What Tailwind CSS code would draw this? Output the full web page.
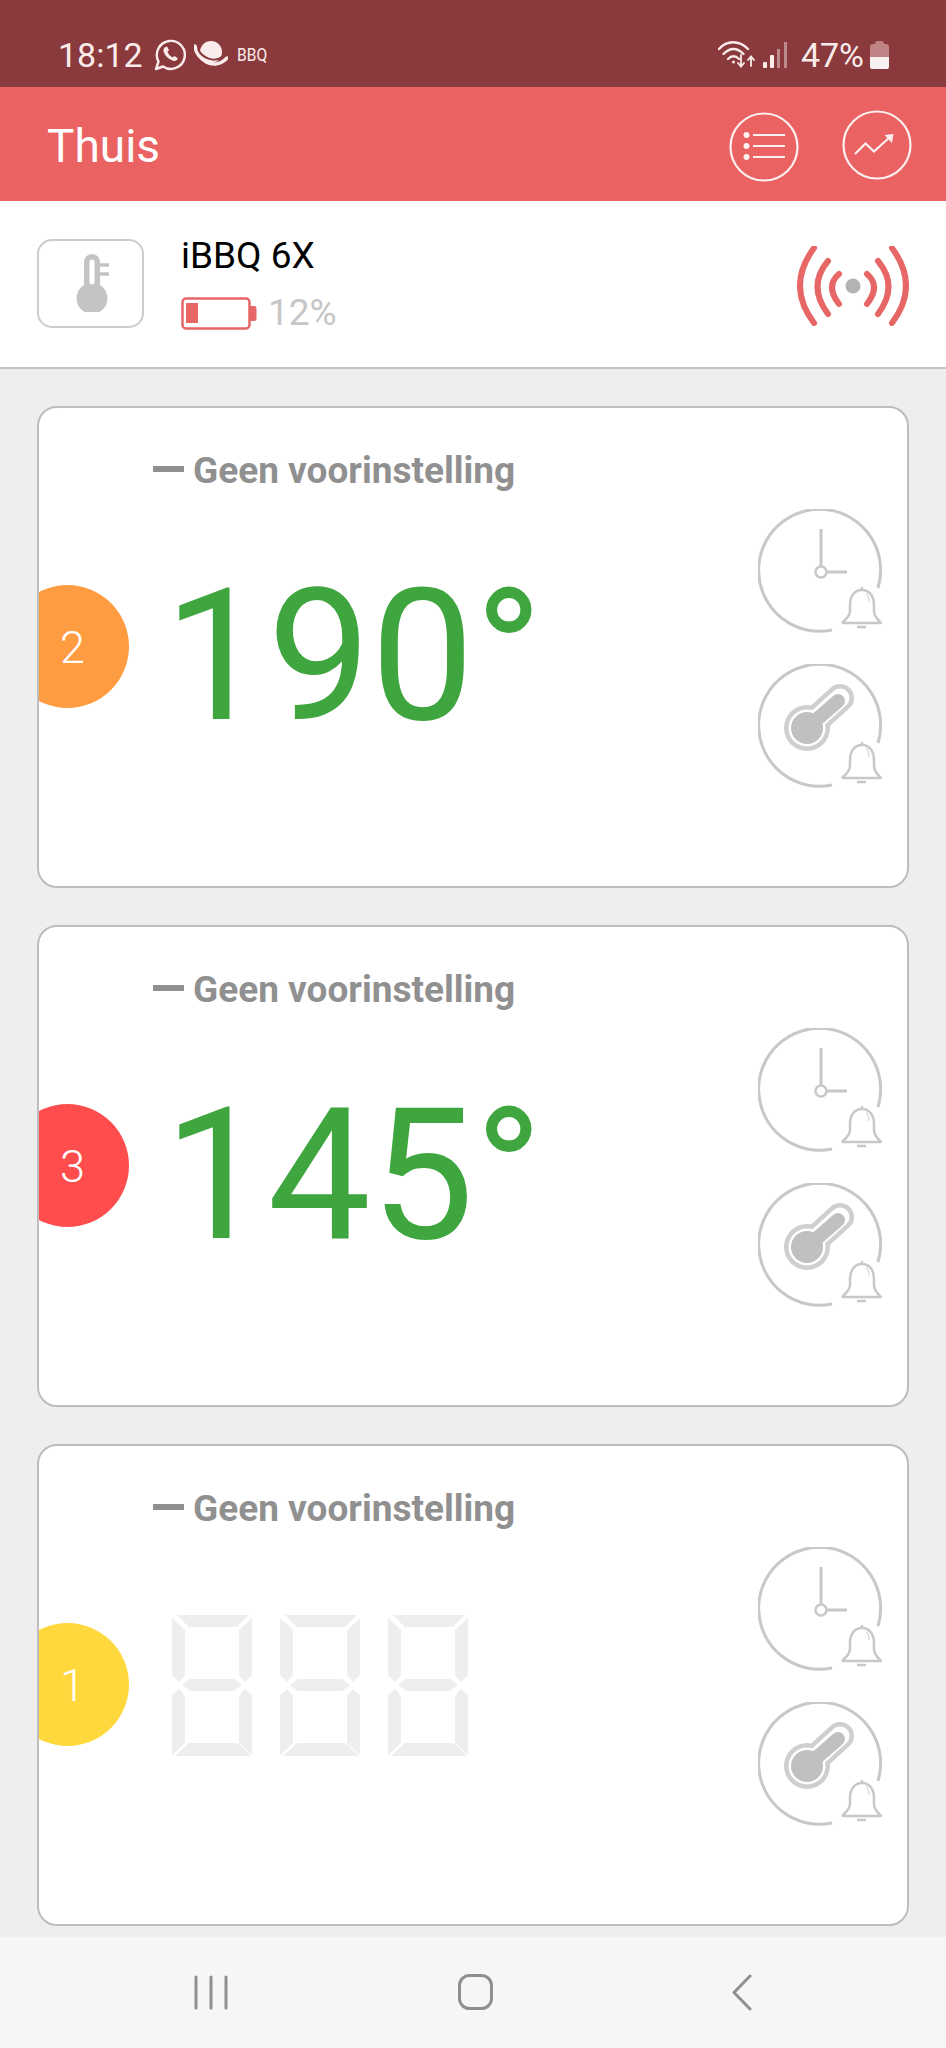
<!DOCTYPE html>
<html lang="nl">
<head>
	<title>iBBQ Thuis</title>
	<meta name="viewport" content="width=device-width, initial-scale=1">
	<script src="https://cdn.jsdelivr.net/npm/@tailwindcss/browser@4"></script>
</head>
<body>
	<!-- shared icons -->
	<svg class="hidden">
		<symbol id="bell" viewBox="0 0 124 124">
			<path d="M104 78v3M104 81C96 81 92 88 92 96V102C92 107 88 110 85 113Q84 114 86 114H122Q124 114 122 113C119 110 116 107 116 102V96C116 88 112 81 104 81ZM99 118H108" fill="#fff" stroke="#c8c8c8" stroke-width="2.500"/>
			<path d="M108 84.500Q111 87 111 93" fill="none" stroke="#d8d8d8" stroke-width="1.200"/>
		</symbol>
		<symbol id="clock" viewBox="0 0 124 124">
			<path d="M120 79A61 61 0 1 0 74 121" fill="none" stroke="#c8c8c8" stroke-width="3"/>
			<path d="M63 20V58M68.500 63H89" fill="none" stroke="#c8c8c8" stroke-width="3"/>
			<circle cx="63" cy="63" r="5.500" fill="#fff" stroke="#c8c8c8" stroke-width="2.500"/>
			<use href="#bell" width="124" height="124"/>
		</symbol>
		<symbol id="probe" viewBox="0 0 124 124">
			<path d="M120 79A61 61 0 1 0 74 121" fill="none" stroke="#c8c8c8" stroke-width="3"/>
			<path d="M49 64L82 34" stroke="#cfcfcf" stroke-width="28" stroke-linecap="round"/>
			<circle cx="49" cy="64" r="23" fill="#cfcfcf"/>
			<path d="M49 64L82 34" stroke="#fff" stroke-width="19" stroke-linecap="round"/>
			<circle cx="49" cy="64" r="18.500" fill="#fff"/>
			<path d="M49 64L80 37" stroke="#c0c0c0" stroke-width="14" stroke-linecap="round"/>
			<circle cx="49" cy="64" r="16" fill="#c0c0c0"/>
			<use href="#bell" width="124" height="124"/>
		</symbol>
		<symbol id="segments" viewBox="0 0 80 141">
			<path fill="#eeeeee" d="M5 0H77L65 12H17ZM0 3L13 15V60L7 67L0 60ZM80 3L67 15V60L73 67L80 60ZM18 64H62L70 70L62 76H18L10 70ZM0 80L7 74L13 81V128L0 140ZM80 80L73 74L67 81V128L80 140ZM3 141L17 128H66L79 141Z"/>
		</symbol>
	</svg>

	<div class="w-[946px] h-[2048px] flex flex-col overflow-hidden bg-[#eeeeee] font-[Roboto,sans-serif]">

		<!-- status bar -->
		<div class="h-[87px] shrink-0 bg-[#8a3a3c] text-[#fbecec] flex items-center pl-[58px] pr-[57px] pt-[22px]">
			<span class="text-[34px] leading-none">18:12</span>
			<svg class="ml-[11px] w-[32px] h-[33px]" viewBox="0 0 32 33" fill="none" stroke="#fbecec">
				<path d="M2 31L4.500 23.500A14 14 0 1 1 9 28.500Z" stroke-width="2.400" stroke-linejoin="round"/>
				<path d="M10.500 9.500Q9 11 9.500 13.500Q12 20.500 19.500 23Q22.500 23.500 24 20.500L20.500 18L18.500 19.500Q15 18 13.500 14L15 12L13 8.500Z" fill="#fbecec" stroke="none"/>
			</svg>
			<svg class="ml-[8px] w-[34px] h-[27px]" viewBox="0 0 34 27" fill="none">
				<circle cx="17" cy="11" r="11" fill="#fbecec"/>
				<path d="M1 5C2 18 20 31 33 17" stroke="#fbecec" stroke-width="3.500" stroke-linecap="round"/>
				<path d="M4 8C8 17 20 22 28 16" stroke="#8a3a3c" stroke-width="2"/>
			</svg>
			<span class="ml-[9px] text-[19px] leading-none scale-x-[.82] origin-left">BBQ</span>
			<svg class="ml-auto w-[37px] h-[27px]" viewBox="0 0 37 27" fill="none" stroke="#fbecec" stroke-width="2.400" stroke-linecap="round">
				<path d="M1 8C9 -1 21 -1 30 8M5.500 13C12 6.500 19 6.500 25.500 13M10 18C13.500 14.500 17.500 14.500 21 18"/>
				<circle cx="15.500" cy="21" r="1.500" fill="#fbecec" stroke="none"/>
				<path d="M23 14V25M20 22L23 25.500L26 22M33 25V16M30 19L33 15.500L36 19" stroke-width="1.800"/>
			</svg>
			<svg class="ml-[8px] w-[24px] h-[26px]" viewBox="0 0 24 26">
				<rect x="0" y="20" width="4" height="6" rx="1" fill="#fbecec"/>
				<rect x="7" y="13" width="4" height="13" rx="1" fill="#fbecec"/>
				<rect x="14" y="7" width="3" height="19" fill="#bf8a8c"/>
				<rect x="21" y="0" width="3" height="26" fill="#bf8a8c"/>
			</svg>
			<span class="ml-[14px] text-[34px] leading-none">47%</span>
			<svg class="ml-[6px] w-[19px] h-[28px]" viewBox="0 0 19 28">
				<path d="M5 3Q5 0 8 0H11Q14 0 14 3H16Q19 3 19 6V16H0V6Q0 3 3 3Z" fill="#c08486"/>
				<path d="M0 16H19V26Q19 28 17 28H2Q0 28 0 26Z" fill="#f6f0f0"/>
			</svg>
		</div>

		<!-- app bar -->
		<div class="h-[114px] shrink-0 bg-[#ea6262] flex items-center pl-[47px] pr-[34px] text-white">
			<span class="text-[46px] leading-none mt-[4px]">Thuis</span>
			<svg class="ml-auto w-[70px] h-[70px] mt-[5px]" viewBox="0 0 70 70" fill="none" stroke="#fdf0f0" stroke-width="2.200">
				<circle cx="35" cy="35" r="33.500"/>
				<path d="M24 23H56M24 34H56M24 45H56"/>
				<g fill="#fdf0f0" stroke="none"><circle cx="17.500" cy="23" r="3"/><circle cx="17.500" cy="34" r="3"/><circle cx="17.500" cy="45" r="3"/></g>
			</svg>
			<svg class="ml-[43px] w-[70px] h-[70px] mt-[1px]" viewBox="0 0 70 70" fill="none" stroke="#fdf0f0" stroke-width="2.200">
				<circle cx="35" cy="35" r="33.500"/>
				<path d="M13 44L23.500 33.500L32 41.500L49 26"/>
				<path d="M42.500 25L51.500 24L50 33Z" fill="#fdf0f0" stroke="none"/>
			</svg>
		</div>

		<!-- device row -->
		<div class="h-[168px] shrink-0 bg-white border-b-2 border-[#c4c4c4] flex items-start pl-[37px] pr-[37px]">
			<div class="mt-[38px] w-[107px] h-[89px] rounded-[15px] border-2 border-[#cccccc] flex items-center justify-center pb-[3px] pl-[2px]">
				<svg class="w-[34px] h-[60px]" viewBox="0 0 34 60">
					<path d="M9 33V10A8 8 0 0 1 25 10V33A15.500 15.500 0 1 1 9 33Z" fill="#c4c4c4"/>
					<path d="M17 10V30" stroke="#fff" stroke-width="5" stroke-linecap="round"/>
					<path d="M25 13H34M25 22H34" stroke="#c4c4c4" stroke-width="3.500"/>
				</svg>
			</div>
			<div class="ml-[37px] mt-[35px] flex flex-col">
				<span class="text-[37px] leading-[40px] text-black">iBBQ 6X</span>
				<div class="flex items-center mt-[17px] h-[40px]">
					<svg class="w-[76px] h-[33px]" viewBox="0 0 76 33">
						<rect x="1.500" y="1.500" width="67" height="30" rx="3.500" fill="#fff" stroke="#e76666" stroke-width="2.500"/>
						<rect x="5" y="6" width="12" height="20" fill="#e76666"/>
						<path d="M69 9H73Q75.500 9 75.500 11V22Q75.500 24 73 24H69Z" fill="#e76666"/>
					</svg>
					<span class="ml-[11px] text-[37px] leading-[40px] text-[#c6c6c6]">12%</span>
				</div>
			</div>
			<svg class="ml-auto mt-[45px] w-[112px] h-[80px]" viewBox="0 0 112 80" fill="none" stroke="#e76666" stroke-width="6" stroke-linecap="round">
				<path d="M17 2Q-11 40 17 77M31 15Q10 40 31 68M42 28Q28 40 42 58"/>
				<path d="M95 2Q123 40 95 77M81 15Q102 40 81 68M70 28Q84 40 70 58"/>
				<circle cx="56" cy="40" r="7.500" fill="#b3b3b3" stroke="none"/>
			</svg>
		</div>

		<!-- probes -->
		<div class="flex-1 px-[37px] pt-[37px] flex flex-col gap-[37px] overflow-hidden">

			<div class="h-[482px] shrink-0 flex rounded-[20px] border-2 border-[#bdbdbd] bg-white overflow-hidden">
				<div class="flex-1">
					<div class="ml-[114px] mt-[42px] h-[40px] flex items-center text-[#909090] font-bold text-[37px] leading-none">
						<span class="w-[31px] h-[6px] bg-[#909090] mr-[9px] mb-[3px]"></span>Geen voorinstelling
					</div>
					<div class="flex mt-[73px]">
						<div class="-ml-[33px] mt-[22px] w-[123px] h-[123px] shrink-0 rounded-full bg-[#ff9c41] text-white flex items-center justify-center pl-[10px] pt-[3px] text-[45px] font-light">2</div>
						<div class="ml-[35px] mt-[1px] text-[184px] leading-none text-[#3fa63f]">190°</div>
					</div>
				</div>
				<div class="w-[124px] mr-[25px] pt-[101px] flex flex-col gap-[31px]">
					<svg class="w-[124px] h-[124px]"><use href="#clock"/></svg>
					<svg class="w-[124px] h-[124px]"><use href="#probe"/></svg>
				</div>
			</div>

			<div class="h-[482px] shrink-0 flex rounded-[20px] border-2 border-[#bdbdbd] bg-white overflow-hidden">
				<div class="flex-1">
					<div class="ml-[114px] mt-[42px] h-[40px] flex items-center text-[#909090] font-bold text-[37px] leading-none">
						<span class="w-[31px] h-[6px] bg-[#909090] mr-[9px] mb-[3px]"></span>Geen voorinstelling
					</div>
					<div class="flex mt-[73px]">
						<div class="-ml-[33px] mt-[22px] w-[123px] h-[123px] shrink-0 rounded-full bg-[#ff4d4d] text-white flex items-center justify-center pl-[10px] pt-[3px] text-[45px] font-light">3</div>
						<div class="ml-[35px] mt-[1px] text-[184px] leading-none text-[#3fa63f]">145°</div>
					</div>
				</div>
				<div class="w-[124px] mr-[25px] pt-[101px] flex flex-col gap-[31px]">
					<svg class="w-[124px] h-[124px]"><use href="#clock"/></svg>
					<svg class="w-[124px] h-[124px]"><use href="#probe"/></svg>
				</div>
			</div>

			<div class="h-[482px] shrink-0 flex rounded-[20px] border-2 border-[#bdbdbd] bg-white overflow-hidden">
				<div class="flex-1">
					<div class="ml-[114px] mt-[42px] h-[40px] flex items-center text-[#909090] font-bold text-[37px] leading-none">
						<span class="w-[31px] h-[6px] bg-[#909090] mr-[9px] mb-[3px]"></span>Geen voorinstelling
					</div>
					<div class="flex mt-[73px]">
						<div class="-ml-[33px] mt-[22px] w-[123px] h-[123px] shrink-0 rounded-full bg-[#ffd83d] text-white flex items-center justify-center pl-[10px] pt-[3px] text-[45px] font-light">1</div>
						<div class="ml-[43px] mt-[14px] flex gap-[28px]">
							<svg class="w-[80px] h-[141px]"><use href="#segments"/></svg>
							<svg class="w-[80px] h-[141px]"><use href="#segments"/></svg>
							<svg class="w-[80px] h-[141px]"><use href="#segments"/></svg>
						</div>
					</div>
				</div>
				<div class="w-[124px] mr-[25px] pt-[101px] flex flex-col gap-[31px]">
					<svg class="w-[124px] h-[124px]"><use href="#clock"/></svg>
					<svg class="w-[124px] h-[124px]"><use href="#probe"/></svg>
				</div>
			</div>
		</div>

		<!-- navigation bar -->
		<div class="h-[111px] shrink-0 bg-[#f6f6f6] flex items-center pb-[1px] pl-[194px]">
			<svg class="w-[34px] h-[35px]" viewBox="0 0 34 35" stroke="#8f8f8f" stroke-width="3" stroke-linecap="round">
				<path d="M2 2V33M17 2V33M32 2V33"/>
			</svg>
			<svg class="ml-[230px] w-[35px] h-[36px]" viewBox="0 0 35 36" fill="none" stroke="#8f8f8f" stroke-width="3">
				<rect x="1.500" y="1.500" width="32" height="33" rx="10"/>
			</svg>
			<svg class="ml-[239px] w-[20px] h-[37px]" viewBox="0 0 20 37" fill="none" stroke="#8f8f8f" stroke-width="3" stroke-linecap="round" stroke-linejoin="round">
				<path d="M18 2L2 18.500L18 35"/>
			</svg>
		</div>
	</div>
</body>
</html>
